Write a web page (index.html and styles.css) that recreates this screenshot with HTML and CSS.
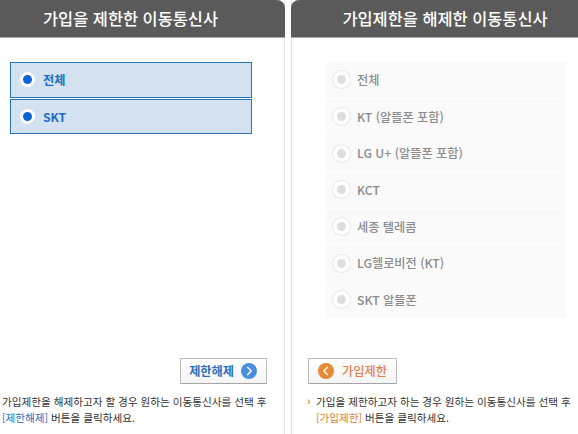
FILE: index.html
```html
<!DOCTYPE html>
<html lang="ko">
<head>
  <meta charset="UTF-8" />
  <title>이동통신사 가입제한</title>
  <link rel="stylesheet" href="styles.css">
</head>
<body>
  <div class="wrap">
    <!-- 가입 제한 -->
    <section class="panel panel-left">
      <h2 class="panel-title">가입을 제한한 이동통신사</h2>
      <ul class="carrier-list">
        <li class="carrier selected"><span class="radio"></span>전체</li>
        <li class="carrier selected"><span class="radio"></span>SKT</li>
      </ul>
      <div class="btn-row btn-row-right">
        <button class="btn btn-blue">제한해제
          <svg class="btn-icon" viewBox="0 0 18 18"><circle cx="9" cy="9" r="9" fill="#4a8fdf"/><path d="M7 4.5 L11.5 9 L7 13.5" fill="none" stroke="#fff" stroke-width="1.6"/></svg>
        </button>
      </div>
      <p class="help">가입제한을 해제하고자 할 경우 원하는 이동통신사를 선택 후<br><span class="blue">[제한해제]</span> 버튼을 클릭하세요.</p>
    </section>

    <!-- 가입제한 해제 -->
    <section class="panel panel-right">
      <h2 class="panel-title">가입제한을 해제한 이동통신사</h2>
      <ul class="carrier-list">
        <li class="carrier"><span class="radio"></span>전체</li>
        <li class="carrier"><span class="radio"></span>KT (알뜰폰 포함)</li>
        <li class="carrier"><span class="radio"></span>LG U+ (알뜰폰 포함)</li>
        <li class="carrier"><span class="radio"></span>KCT</li>
        <li class="carrier"><span class="radio"></span>세종 텔레콤</li>
        <li class="carrier"><span class="radio"></span>LG헬로비전 (KT)</li>
        <li class="carrier"><span class="radio"></span>SKT 알뜰폰</li>
      </ul>
      <div class="btn-row">
        <button class="btn btn-orange">
          <svg class="btn-icon" viewBox="0 0 18 18"><circle cx="9" cy="9" r="9" fill="#e88a35"/><path d="M11 4.5 L6.5 9 L11 13.5" fill="none" stroke="#fff" stroke-width="1.6"/></svg>
          가입제한
        </button>
      </div>
      <p class="help help-mark">가입을 제한하고자 하는 경우 원하는 이동통신사를 선택 후<br><span class="orange">[가입제한]</span> 버튼을 클릭하세요.</p>
    </section>
  </div>
</body>
</html>
```

FILE: styles.css
```css
* {
  box-sizing: border-box;
}

body {
  margin: 0;
  background: #fff;
  font-family: "Noto Sans CJK KR", "Noto Sans", sans-serif;
  overflow: hidden;
}

.wrap {
  display: flex;
  justify-content: space-between;
  width: 578px;
  height: 434px;
}

.panel {
  display: flex;
  flex-direction: column;
  height: 434px;
}

.panel-left {
  width: 285px;
  border-right: 1px solid #e6e6e6;
}

.panel-right {
  width: 287px;
  border-left: 1px solid #e0e0e0;
}

.panel-title {
  margin: 0;
  height: 38px;
  background: #5a5a5a;
  border-bottom: 1px solid #a8a8a8;
  color: #fff;
  font-size: 16.4px;
  font-weight: 500;
  line-height: 37px;
  text-align: center;
}

.panel-left .panel-title {
  margin-right: -1px;
  padding-right: 24px;
  border-top-right-radius: 8px;
}

.panel-right .panel-title {
  margin-left: -1px;
  padding-left: 21px;
  border-top-left-radius: 8px;
}

.carrier-list {
  display: flex;
  flex-direction: column;
  gap: 1px;
  height: 280px;
  margin: 24px 0 0;
  padding: 0;
  list-style: none;
}

.panel-left .carrier-list {
  width: 242px;
  margin-left: 10px;
}

.panel-right .carrier-list {
  width: 241px;
  margin-left: 33px;
}

.carrier {
  display: flex;
  align-items: center;
  height: 35.7px;
  padding-left: 8px;
  background: #fafafa;
  color: #8c8c8c;
  font-size: 12.2px;
  font-weight: 500;
}

.carrier.selected {
  background: #d3e1f1;
  border: 1px solid #2b73b7;
  padding-left: 9px;
  color: #1f6cc0;
  font-weight: 700;
}

.radio {
  flex: none;
  width: 17px;
  height: 17px;
  margin-right: 7px;
  border: 4px solid #fff;
  border-radius: 50%;
  background: #dedede;
  box-shadow: 0 0 0 1px #e8e8e8;
}

.carrier.selected .radio {
  width: 15px;
  height: 15px;
  margin-right: 8px;
  border-width: 3px;
  background: #0d63d8;
  box-shadow: none;
}

.btn-row {
  display: flex;
  margin-top: 16px;
  padding-left: 16px;
}

.btn-row-right {
  justify-content: flex-end;
  padding: 0 17px 0 0;
}

.btn {
  display: flex;
  align-items: center;
  gap: 7px;
  height: 26px;
  padding: 0 9px 0 8px;
  background: linear-gradient(#fff, #f4f4f4);
  border: 1px solid #bdbdbd;
  border-bottom-color: #a5a5a5;
  font-family: inherit;
  font-size: 12.2px;
  font-weight: 500;
}

.btn-icon {
  width: 16px;
  height: 16px;
}

.btn-blue {
  color: #2f6fb8;
  font-weight: 700;
}

.btn-orange {
  gap: 8px;
  padding: 0 9px 0 9px;
  color: #e2824a;
}

.help {
  margin: 10px 0 0 2px;
  color: #333;
  font-size: 10.6px;
  line-height: 16px;
}

.help-mark {
  position: relative;
  margin-left: 24px;
  white-space: nowrap;
}

.help-mark::before {
  content: "›";
  position: absolute;
  left: -9px;
  top: -2px;
  color: #e2892f;
  font-size: 11px;
  font-weight: 700;
}

.blue {
  color: #1f6cc0;
}

.orange {
  color: #d9822b;
}
```
